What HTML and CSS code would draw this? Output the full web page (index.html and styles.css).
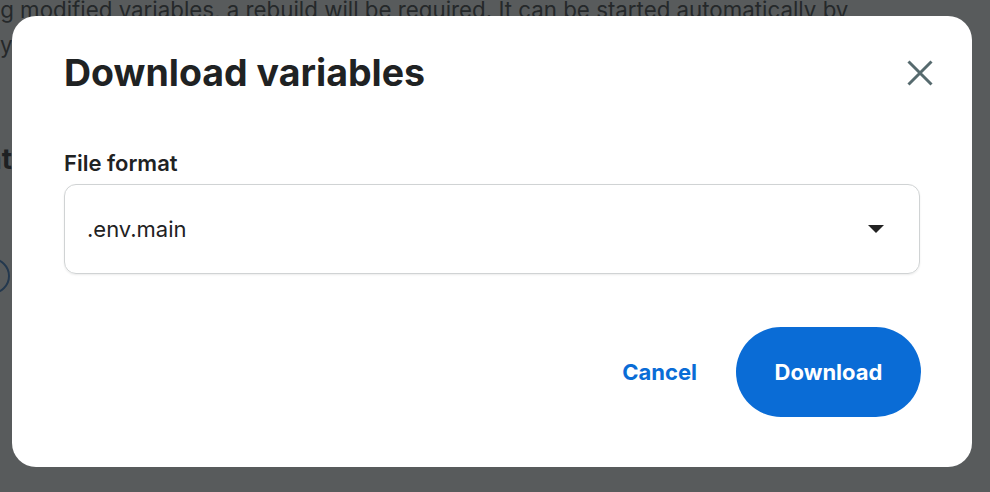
FILE: index.html
```html
<!DOCTYPE html>
<html lang="en">
<head>
    <meta charset="UTF-8">
    <title>Download variables</title>
    <link rel="stylesheet" href="styles.css">
</head>
<body>
    <!-- page behind the dialog -->
    <div class="page">
        <p class="page-text">ng modified variables, a rebuild will be required. It can be started automatically by
            your deploy hook or by hand from the builds list.</p>
        <h2 class="page-heading">Export format</h2>
        <div class="page-btn">Copy</div>
    </div>

    <div class="overlay"></div>

    <!-- DIALOG -->
    <div class="modal" role="dialog" aria-labelledby="modalTitle">
        <div class="modal-header">
            <h1 id="modalTitle">Download variables</h1>
            <button class="close-btn" type="button" aria-label="Close">
                <svg width="26" height="26" viewBox="0 0 26 26">
                    <path d="M1.5 1.5 L24.5 24.5 M24.5 1.5 L1.5 24.5" stroke="currentColor" stroke-width="3" fill="none"/>
                </svg>
            </button>
        </div>

        <label class="field-label" for="formatSelect">File format</label>
        <div class="select" id="formatSelect">
            <span class="select-value">.env.main</span>
            <svg class="caret" width="16" height="8" viewBox="0 0 16 8">
                <path d="M0 0 H16 L8 8 Z" fill="currentColor"/>
            </svg>
        </div>

        <div class="modal-footer">
            <button class="btn-link" type="button">Cancel</button>
            <button class="btn-primary" type="button">Download</button>
        </div>
    </div>
</body>
</html>
```

FILE: styles.css
```css
:root {
    --blue: #0a6cd6;
    --ink: #1f2223;
    --muted: #566a6e;
    --border: #d0d3d4;
}

* {
    box-sizing: border-box;
    margin: 0;
    padding: 0;
}

body {
    font-family: 'Inter', 'Liberation Sans', sans-serif;
    background: #fff;
    color: var(--ink);
    width: 990px;
    height: 492px;
    overflow: hidden;
}

.page-text {
    font-size: 22.3px;
    line-height: 35px;
    margin-top: -8px;
    text-indent: -13px;
    color: #3a3d3e;
    width: 870px;
}

.page-heading {
    font-size: 28px;
    font-weight: 700;
    margin-top: 80px;
    margin-left: -248px;
    width: 260px;
    text-align: right;
    white-space: nowrap;
}

.page-btn {
    width: 120px;
    height: 36px;
    margin-top: 82px;
    margin-left: -110px;
    border: 2px solid #3478c7;
    border-radius: 18px;
    color: transparent;
}

.overlay {
    position: fixed;
    inset: 0;
    background: rgba(30, 34, 35, 0.74);
}

.modal {
    position: fixed;
    left: 12px;
    top: 16px;
    width: 960px;
    height: 451px;
    background: #fff;
    border-radius: 24px;
    padding: 35px 52px 0;
}

.modal-header {
    display: flex;
    justify-content: space-between;
    align-items: center;
}

h1 {
    font-size: 37.5px;
    line-height: 44px;
    font-weight: 700;
    color: var(--ink);
}

.close-btn {
    border: none;
    background: none;
    color: var(--muted);
    display: flex;
    margin-right: -13px;
    padding: 0;
}

.field-label {
    display: block;
    margin-top: 55px;
    font-size: 22px;
    line-height: 26px;
    font-weight: 600;
}

.select {
    display: flex;
    align-items: center;
    justify-content: space-between;
    height: 90px;
    margin-top: 8px;
    padding: 0 35px 0 22px;
    border: 1px solid var(--border);
    border-radius: 12px;
    box-shadow: 0 1px 2px rgba(0, 0, 0, 0.08);
}

.select-value {
    font-size: 22px;
    color: var(--ink);
}

.caret {
    color: #222;
}

.modal-footer {
    display: flex;
    justify-content: flex-end;
    align-items: center;
    gap: 39px;
    margin-top: 53px;
    margin-right: -1px;
}

.btn-link,
.btn-primary {
    font-family: inherit;
    font-size: 22px;
    font-weight: 700;
    border: none;
    cursor: pointer;
}

.btn-link {
    background: none;
    color: var(--blue);
}

.btn-primary {
    width: 185px;
    height: 90px;
    border-radius: 45px;
    background: var(--blue);
    color: #fff;
}
```
